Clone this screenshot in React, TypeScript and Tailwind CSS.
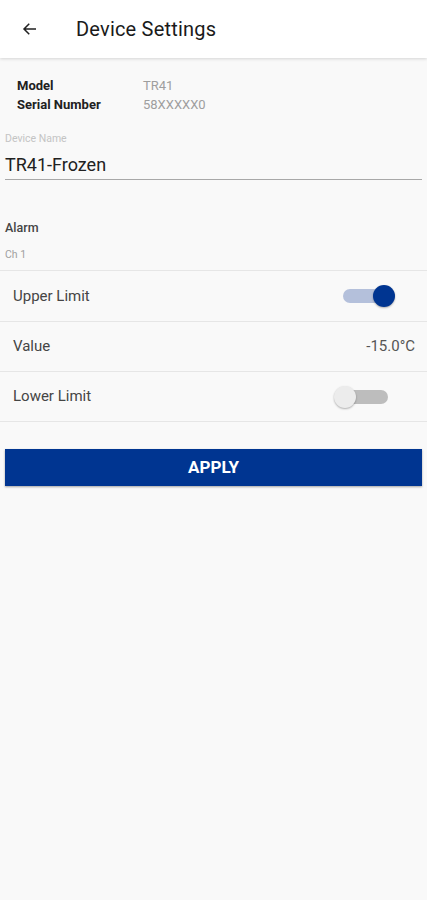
import React, { useState } from 'react';

const font = { fontFamily: 'Roboto, "Noto Sans", sans-serif' };

const Toggle: React.FC<{ on: boolean; onChange: () => void }> = ({ on, onChange }) => (
  <button onClick={onChange} className="relative w-[61px] h-[22px]">
    <span
      className={`absolute left-[9px] top-[4px] w-[45px] h-[14px] rounded-full ${on ? 'bg-[#b4c0db]' : 'bg-[#bdbdbd]'}`}
    />
    <span
      className={`absolute top-0 w-[22px] h-[22px] rounded-full shadow-[0_1px_2px_rgba(0,0,0,0.3)] ${
        on ? 'left-[39px] bg-[#003591]' : 'left-0 bg-[#ececec]'
      }`}
    />
  </button>
);

const App: React.FC = () => {
  const [upper, setUpper] = useState(true);
  const [lower, setLower] = useState(false);

  return (
    <div style={font} className="min-h-[900px] bg-[#f9f9f9] flex flex-col">
      <div className="h-[58px] bg-white flex items-center shadow-[0_1px_3px_rgba(0,0,0,0.15)] relative z-10">
        <button className="ml-[19px] w-[22px] h-[22px] flex items-center justify-center">
          <svg width="18" height="18" viewBox="0 0 24 24" fill="none" stroke="#212121" strokeWidth="2">
            <path d="M20 12H4M11 5l-7 7 7 7" />
          </svg>
        </button>
        <h1 className="ml-[35px] text-[20px] font-normal text-[#1a1a1a] tracking-[0.2px]">Device Settings</h1>
      </div>

      <div className="pt-[18px] pl-[17px] text-[13px] leading-[19px]">
        <div className="flex">
          <span className="w-[126px] font-bold text-[#212121]">Model</span>
          <span className="text-[#9e9e9e]">TR41</span>
        </div>
        <div className="flex">
          <span className="w-[126px] font-bold text-[#212121]">Serial Number</span>
          <span className="text-[#9e9e9e]">58XXXXX0</span>
        </div>
      </div>

      <div className="mx-[5px] mt-[18px]">
        <div className="text-[10.5px] leading-[14px] text-[#c4c4c4]">Device Name</div>
        <div className="mt-[7px] pb-[2px] text-[18px] leading-[24px] text-[#212121] border-b border-[#a8a8a8]">
          TR41-Frozen
        </div>
      </div>

      <div className="px-[5px] mt-[40px] text-[12.5px] leading-[16px] font-medium text-[#454545]">Alarm</div>
      <div className="px-[5px] mt-[12px] text-[10.5px] leading-[14px] text-[#a0a0a0]">Ch 1</div>

      <div className="mt-[8px] border-t border-[#e6e6e6]">
        <div className="h-[51px] flex items-center justify-between pl-[13px] pr-[32px] border-b border-[#e6e6e6]">
          <span className="text-[15px] text-[#454545]">Upper Limit</span>
          <Toggle on={upper} onChange={() => setUpper(!upper)} />
        </div>
        <div className="h-[50px] flex items-center justify-between pl-[13px] pr-[12px] border-b border-[#e6e6e6]">
          <span className="text-[15px] text-[#454545]">Value</span>
          <span className="text-[15px] text-[#555]">-15.0°C</span>
        </div>
        <div className="h-[50px] flex items-center justify-between pl-[13px] pr-[32px] border-b border-[#e6e6e6]">
          <span className="text-[15px] text-[#454545]">Lower Limit</span>
          <Toggle on={lower} onChange={() => setLower(!lower)} />
        </div>
      </div>

      <div className="px-[5px] mt-[27px]">
        <button className="w-full h-[37px] bg-[#003591] text-white font-bold text-[17px] shadow-[0_1px_2px_rgba(0,0,0,0.35)]">
          APPLY
        </button>
      </div>
    </div>
  );
};

export default App;
